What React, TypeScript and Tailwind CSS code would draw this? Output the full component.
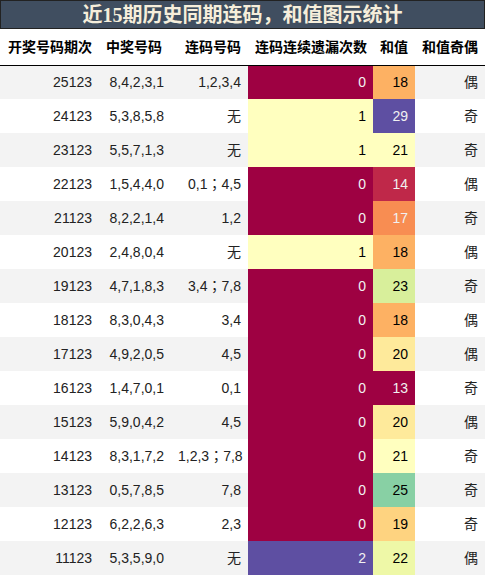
type Row = {
  issue: string;
  nums: string;
  lian: string;
  miss: number;
  sum: number;
  parity: string;
};

const rows: Row[] = [
  { issue: "25123", nums: "8,4,2,3,1", lian: "1,2,3,4", miss: 0, sum: 18, parity: "偶" },
  { issue: "24123", nums: "5,3,8,5,8", lian: "无", miss: 1, sum: 29, parity: "奇" },
  { issue: "23123", nums: "5,5,7,1,3", lian: "无", miss: 1, sum: 21, parity: "奇" },
  { issue: "22123", nums: "1,5,4,4,0", lian: "0,1；4,5", miss: 0, sum: 14, parity: "偶" },
  { issue: "21123", nums: "8,2,2,1,4", lian: "1,2", miss: 0, sum: 17, parity: "奇" },
  { issue: "20123", nums: "2,4,8,0,4", lian: "无", miss: 1, sum: 18, parity: "偶" },
  { issue: "19123", nums: "4,7,1,8,3", lian: "3,4；7,8", miss: 0, sum: 23, parity: "奇" },
  { issue: "18123", nums: "8,3,0,4,3", lian: "3,4", miss: 0, sum: 18, parity: "偶" },
  { issue: "17123", nums: "4,9,2,0,5", lian: "4,5", miss: 0, sum: 20, parity: "偶" },
  { issue: "16123", nums: "1,4,7,0,1", lian: "0,1", miss: 0, sum: 13, parity: "奇" },
  { issue: "15123", nums: "5,9,0,4,2", lian: "4,5", miss: 0, sum: 20, parity: "偶" },
  { issue: "14123", nums: "8,3,1,7,2", lian: "1,2,3；7,8", miss: 0, sum: 21, parity: "奇" },
  { issue: "13123", nums: "0,5,7,8,5", lian: "7,8", miss: 0, sum: 25, parity: "奇" },
  { issue: "12123", nums: "6,2,2,6,3", lian: "2,3", miss: 0, sum: 19, parity: "奇" },
  { issue: "11123", nums: "5,3,5,9,0", lian: "无", miss: 2, sum: 22, parity: "偶" },
];

const missStyle: Record<number, string> = {
  0: "bg-[#9e0142] text-[#f1f1f1]",
  1: "bg-[#ffffbf] text-black",
  2: "bg-[#5e4fa2] text-[#f1f1f1]",
};

const sumStyle: Record<number, string> = {
  13: "bg-[#9e0142] text-[#f1f1f1]",
  14: "bg-[#bf2849] text-[#f1f1f1]",
  17: "bg-[#f88d52] text-[#f1f1f1]",
  18: "bg-[#fdb163] text-black",
  19: "bg-[#fed380] text-black",
  20: "bg-[#feea9b] text-black",
  21: "bg-[#ffffbf] text-black",
  22: "bg-[#eef8a7] text-black",
  23: "bg-[#d8ef9b] text-black",
  25: "bg-[#88d0a4] text-black",
  29: "bg-[#5e4fa2] text-[#f1f1f1]",
};

const headers = ["开奖号码期次", "中奖号码", "连码号码", "连码连续遗漏次数", "和值", "和值奇偶"];

// the full-width semicolon is drawn centred in the reference
function Lian({ text }: { text: string }) {
  const parts = text.split("；");
  return (
    <>
      {parts.map((p, i) => (
        <span key={i}>
          {i > 0 && <span className="font-['Noto_Sans_CJK_TC',sans-serif]">；</span>}
          {p}
        </span>
      ))}
    </>
  );
}

export default function App() {
  return (
    <div className="w-[486px] bg-white font-['Liberation_Sans','Noto_Sans_CJK_SC',sans-serif] text-[14px] text-[#222]">
      <div className="flex h-[29px] w-[485px] items-center justify-center border border-[#222] bg-[#404e60] font-['Liberation_Serif','Noto_Sans_CJK_SC',serif] text-[20px] font-bold text-[#f6eedb]">
        近15期历史同期连码，和值图示统计
      </div>
      <table className="w-[485px] table-fixed border-collapse">
        <colgroup>
          <col className="w-[99px]" />
          <col className="w-[72px]" />
          <col className="w-[77px]" />
          <col className="w-[125px]" />
          <col className="w-[42px]" />
          <col className="w-[70px]" />
        </colgroup>
        <thead>
          <tr className="h-[36px] border-b border-black">
            {headers.map((h, i) => (
              <th
                key={h}
                className={`whitespace-nowrap px-[7px] pt-[1px] font-bold text-black ${
                  i === 1 ? "text-left" : "text-right"
                }`}
              >
                {h}
              </th>
            ))}
          </tr>
        </thead>
        <tbody>
          {rows.map((r, i) => (
            <tr key={r.issue} className={`h-[34px] ${i % 2 === 0 ? "bg-[#f3f3f3]" : "bg-white"}`}>
              <td className="px-[7px] text-right">{r.issue}</td>
              <td className="px-[7px] text-right">{r.nums}</td>
              <td className="whitespace-nowrap px-[7px] text-right">
                <Lian text={r.lian} />
              </td>
              <td className={`px-[7px] text-right ${missStyle[r.miss]}`}>{r.miss}</td>
              <td className={`px-[7px] text-right ${sumStyle[r.sum]}`}>{r.sum}</td>
              <td className="px-[7px] text-right">{r.parity}</td>
            </tr>
          ))}
        </tbody>
      </table>
    </div>
  );
}
